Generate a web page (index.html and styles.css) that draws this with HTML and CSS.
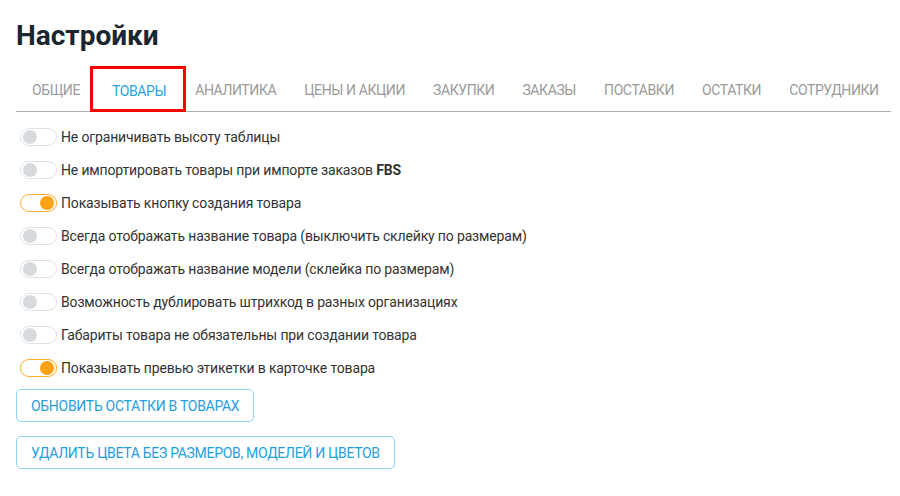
FILE: index.html
```html
<!DOCTYPE html>
<html lang="ru">
    <head>
        <meta charset="UTF-8">
        <meta name="viewport" content="width=device-width, initial-scale=1.0">
        <title>Настройки</title>

        <link rel="stylesheet" href="styles.css">
    </head>
    <body>
        <div class="page">

            <h1 class="titulo">Настройки</h1>

            <div class="abas">
                <span class="aba">Общие</span>
                <span class="aba ativa">Товары</span>
                <span class="aba">Аналитика</span>
                <span class="aba">Цены и акции</span>
                <span class="aba">Закупки</span>
                <span class="aba">Заказы</span>
                <span class="aba">Поставки</span>
                <span class="aba">Остатки</span>
                <span class="aba">Сотрудники</span>
            </div>

            <div class="opcoes">
                <label class="opcao">
                    <span class="chave"></span>
                    Не ограничивать высоту таблицы
                </label>
                <label class="opcao">
                    <span class="chave"></span>
                    <span>Не импортировать товары при импорте заказов <b>FBS</b></span>
                </label>
                <label class="opcao">
                    <span class="chave ligada"></span>
                    Показывать кнопку создания товара
                </label>
                <label class="opcao">
                    <span class="chave"></span>
                    Всегда отображать название товара (выключить склейку по размерам)
                </label>
                <label class="opcao">
                    <span class="chave"></span>
                    Всегда отображать название модели (склейка по размерам)
                </label>
                <label class="opcao">
                    <span class="chave"></span>
                    Возможность дублировать штрихкод в разных организациях
                </label>
                <label class="opcao">
                    <span class="chave"></span>
                    Габариты товара не обязательны при создании товара
                </label>
                <label class="opcao">
                    <span class="chave ligada"></span>
                    Показывать превью этикетки в карточке товара
                </label>
            </div>

            <div class="botoes">
                <button class="botao">Обновить остатки в товарах</button>
                <button class="botao">Удалить цвета без размеров, моделей и цветов</button>
            </div>

        </div>
    </body>
</html>
```

FILE: styles.css
```css
body{
    margin: 0;
    background-color: #ffffff;
    font-family: Roboto, "Liberation Sans", sans-serif;
    color: #333333;
}
.page{
    padding: 0 9px 0 16px;
}
.titulo{
    margin: 0;
    padding-top: 18px;
    font-size: 28px;
    font-weight: 700;
    color: #1b2631;
    line-height: 36px;
}

/* abas */
.abas{
    display: flex;
    margin-top: 12px;
    border-bottom: 1px solid #a9b1b8;
    height: 42px;
    padding-top: 3px;
    align-items: center;
    white-space: nowrap;
}
.aba{
    padding: 0 14px;
    font-size: 14px;
    text-transform: uppercase;
    color: #9a9a9a;
    letter-spacing: -0.4px;
}
.aba:first-child{
    padding-left: 16px;
}
.aba.ativa{
    color: #2aa4e6;
    padding: 3px 20px 0 22px;
    margin: -3px -5px -1px -4px;
    align-self: stretch;
    display: flex;
    align-items: center;
    outline: 3px solid #ff0000;
    outline-offset: -3px;
}

/* opções */
.opcoes{
    display: flex;
    flex-direction: column;
    padding-top: 8px;
}
.opcao{
    display: flex;
    align-items: center;
    gap: 4px;
    height: 33px;
    font-size: 14px;
    color: #333333;
    letter-spacing: -0.15px;
}
.opcao b{
    font-weight: 700;
}
.chave{
    position: relative;
    box-sizing: border-box;
    width: 37px;
    height: 18px;
    margin-left: 4px;
    border: 1px solid #dfe3e6;
    border-radius: 9px;
    background-color: #ffffff;
    flex-shrink: 0;
}
.chave::after{
    content: '';
    position: absolute;
    top: 1px;
    left: 2px;
    width: 14px;
    height: 14px;
    border-radius: 50%;
    background-color: #d6dadd;
}
.chave.ligada{
    border-color: #ffac30;
}
.chave.ligada::after{
    left: auto;
    right: 2px;
    background-color: #ffa114;
}

/* botões */
.botoes{
    display: flex;
    flex-direction: column;
    align-items: flex-start;
    gap: 14px;
    padding-top: 5px;
}
.botao{
    height: 33px;
    padding: 0 14px;
    border: 1px solid #8fd3f7;
    border-radius: 5px;
    background-color: #ffffff;
    color: #1f9ee2;
    font-family: Roboto, "Liberation Sans", sans-serif;
    font-size: 14px;
    text-transform: uppercase;
    letter-spacing: -0.3px;
}
```
